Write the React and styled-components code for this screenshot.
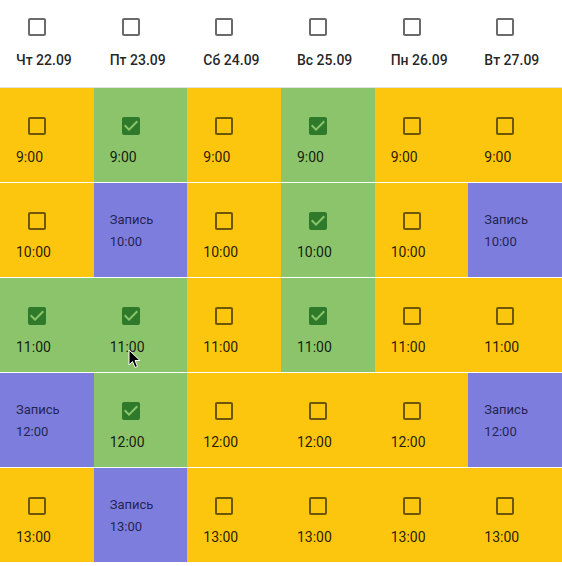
import React from 'react';
import styled, { createGlobalStyle } from 'styled-components';

const GlobalStyle = createGlobalStyle`
  html, body {
    margin: 0;
    padding: 0;
    background: #fff;
    font-family: Roboto, "Noto Sans", "Liberation Sans", sans-serif;
    -webkit-font-smoothing: antialiased;
  }
`;

const COLORS = {
  free: '#fcc60f',
  checked: '#8bc46a',
  booked: '#7c7ddd',
};

const days = ['Чт 22.09', 'Пт 23.09', 'Сб 24.09', 'Вс 25.09', 'Пн 26.09', 'Вт 27.09'];

// f = free, c = checked, b = booked
const schedule = [
  { time: '9:00', cells: 'fcfcff' },
  { time: '10:00', cells: 'fbfcfb' },
  { time: '11:00', cells: 'ccfcff' },
  { time: '12:00', cells: 'bcfffb' },
  { time: '13:00', cells: 'fbffff' },
];

const Page = styled.div`
  position: relative;
  width: 100%;
  height: 566px;
  overflow: hidden;
`;

const Row = styled.div`
  display: grid;
  grid-template-columns: repeat(6, 1fr);
  height: ${({ $header }) => ($header ? '88px' : '95px')};
  box-sizing: border-box;
  border-bottom: 1px solid ${({ $header }) => ($header ? '#e2e2e2' : 'rgba(255,255,255,0.55)')};
`;

const HeadCell = styled.div`
  display: flex;
  flex-direction: column;
  align-items: flex-start;
  padding: 6px 16px 0;
  color: rgba(0, 0, 0, 0.87);
`;

const DayLabel = styled.span`
  font-size: 14px;
  font-weight: 500;
  line-height: 24px;
  white-space: nowrap;
`;

const Cell = styled.div`
  display: flex;
  flex-direction: column;
  align-items: flex-start;
  padding: ${({ $status }) => ($status === 'b' ? '26px 16px 0' : '17px 16px 0')};
  background: ${({ $status }) =>
    $status === 'c' ? COLORS.checked : $status === 'b' ? COLORS.booked : COLORS.free};
  color: rgba(0, 0, 0, 0.87);
`;

const TimeLabel = styled.span`
  font-size: 14px;
  line-height: 20px;
`;

const BookedText = styled.span`
  font-size: 13px;
  line-height: 22px;
  color: rgba(10, 10, 40, 0.8);
`;

const Box = styled.span`
  display: inline-flex;
  align-items: center;
  justify-content: center;
  width: 42px;
  height: 42px;
  flex-shrink: 0;

  svg {
    width: 24px;
    height: 24px;
    fill: ${({ $color }) => $color};
  }
`;

const CursorMark = styled.svg`
  position: absolute;
  left: 128px;
  top: 349px;
  width: 13px;
  height: 20px;
`;

const Checkbox = ({ checked, color }) => (
  <Box $color={color}>
    <svg viewBox="0 0 24 24">
      {checked ? (
        <path d="M19 3H5c-1.11 0-2 .9-2 2v14c0 1.1.89 2 2 2h14c1.11 0 2-.9 2-2V5c0-1.1-.89-2-2-2zm-9 14l-5-5 1.41-1.41L10 14.170l7.59-7.59L19 8l-9 9z" />
      ) : (
        <path d="M19 5v14H5V5h14m0-2H5c-1.11 0-2 .9-2 2v14c0 1.1.89 2 2 2h14c1.1 0 2-.9 2-2V5c0-1.1-.9-2-2-2z" />
      )}
    </svg>
  </Box>
);

export default function App() {
  return (
    <Page>
      <GlobalStyle />
      <Row $header>
        {days.map((d) => (
          <HeadCell key={d}>
            <Checkbox color="#6a6a6a" />
            <DayLabel>{d}</DayLabel>
          </HeadCell>
        ))}
      </Row>
      {schedule.map((row) => (
        <Row key={row.time}>
          {row.cells.split('').map((s, i) => (
            <Cell key={i} $status={s}>
              {s === 'b' ? (
                <>
                  <BookedText>Запись</BookedText>
                  <BookedText>{row.time}</BookedText>
                </>
              ) : (
                <>
                  <Checkbox
                    checked={s === 'c'}
                    color={s === 'c' ? '#2f7a2a' : '#6e5608'}
                  />
                  <TimeLabel>{row.time}</TimeLabel>
                </>
              )}
            </Cell>
          ))}
        </Row>
      ))}
      <CursorMark viewBox="0 0 13 20">
        <path d="M1 1 L1 16 L4.5 12.5 L7 18.5 L9.5 17.5 L7 11.5 L12 11.5 Z" fill="#000" stroke="#fff" strokeWidth="1" />
      </CursorMark>
    </Page>
  );
}
